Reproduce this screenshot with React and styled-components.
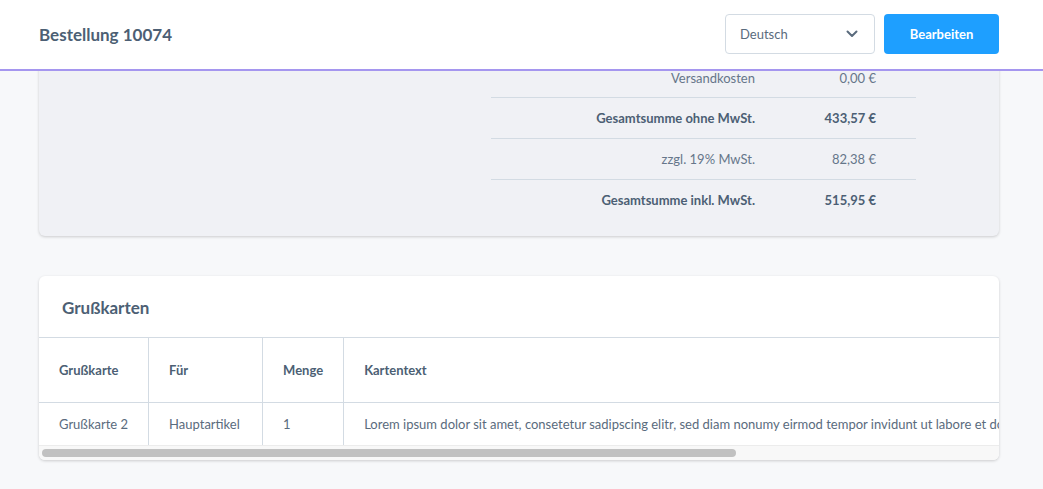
import React from "react";
import styled, { createGlobalStyle } from "styled-components";

const GlobalStyle = createGlobalStyle`
  * { box-sizing: border-box; }
  html, body {
    margin: 0;
    padding: 0;
    background: #f7f8fa;
    font-family: "Lato", "Liberation Sans", sans-serif;
    color: #4c5f74;
  }
`;

const Page = styled.div`
  height: 489px;
  overflow: hidden;
  display: flex;
  flex-direction: column;
`;

const Header = styled.header`
  flex: 0 0 auto;
  height: 71px;
  background: #fff;
  border-bottom: 2px solid #a596ef;
  display: flex;
  align-items: center;
  justify-content: space-between;
  padding: 0 44px 0 39px;
  position: relative;
  z-index: 2;
`;

const Title = styled.h1`
  margin: 0;
  font-size: 17px;
  font-weight: 700;
  color: #4c5f74;
`;

const Actions = styled.div`
  display: flex;
  gap: 9px;
  margin-top: -2px;
`;

const Select = styled.div`
  width: 150px;
  height: 40px;
  border: 1px solid #d3dbe3;
  border-radius: 4px;
  display: flex;
  align-items: center;
  justify-content: space-between;
  padding: 0 16px 0 14px;
  font-size: 13px;
  color: #5a6b7d;
  background: #fff;
`;

const Button = styled.button`
  width: 115px;
  height: 40px;
  border: none;
  border-radius: 4px;
  background: #1e9fff;
  color: #fff;
  font-family: inherit;
  font-size: 13px;
  font-weight: 700;
`;

const Main = styled.main`
  flex: 1;
  overflow: hidden;
  padding: 0 44px 0 39px;
  display: flex;
  flex-direction: column;
  gap: 40px;
`;

const SummaryCard = styled.section`
  margin-top: -31px;
  background: #f0f1f5;
  border-radius: 6px;
  box-shadow: 0 1px 3px rgba(0, 0, 0, 0.18);
  padding: 16px 83px 16px 0;
  display: flex;
  justify-content: flex-end;
`;

const Totals = styled.div`
  width: 425px;
`;

const TotalRow = styled.div`
  display: grid;
  grid-template-columns: 264px 1fr;
  height: 41px;
  align-items: center;
  font-size: 13px;
  font-weight: ${(p) => (p.$bold ? 700 : 400)};
  color: ${(p) => (p.$bold ? "#4c5f74" : "#66768a")};
  & + & {
    border-top: 1px solid #d3dbe3;
  }
  &:first-child {
    padding-top: 2px;
  }
`;

const Cell = styled.span`
  text-align: right;
  padding-right: ${(p) => p.$pad || 0}px;
`;

const Card = styled.section`
  background: #fff;
  border-radius: 6px;
  box-shadow: 0 1px 3px rgba(0, 0, 0, 0.18);
  overflow: hidden;
`;

const CardTitle = styled.h2`
  margin: 0;
  height: 62px;
  display: flex;
  align-items: center;
  padding: 2px 0 0 23px;
  font-size: 17px;
  font-weight: 700;
  color: #4c5f74;
  border-bottom: 1px solid #d3dbe3;
`;

const Scroller = styled.div`
  overflow-x: hidden;
`;

const ScrollTrack = styled.div`
  height: 15px;
  background: #f8f8f8;
  border-top: 1px solid #ececec;
  padding: 3px 3px 0;
`;

const ScrollThumb = styled.div`
  height: 8px;
  border-radius: 4px;
  background: #c1c1c1;
`;

const Table = styled.table`
  border-collapse: collapse;
  white-space: nowrap;
  font-size: 13px;
`;

const Th = styled.th`
  height: 64px;
  text-align: left;
  font-weight: 700;
  padding: 0 20px;
  width: ${(p) => p.$w || "auto"};
  min-width: ${(p) => p.$w || "auto"};
  color: #4c5f74;
  border-right: 1px solid #d3dbe3;
  border-bottom: 1px solid #d3dbe3;
  &:last-child { border-right: none; }
`;

const Td = styled.td`
  height: 43px;
  padding: 0 20px;
  color: #5a6b7d;
  border-right: 1px solid #d3dbe3;
  &:last-child { border-right: none; }
`;

const Chevron = () => (
  <svg width="12" height="8" viewBox="0 0 12 8" fill="none">
    <path d="M1.5 1.5 6 6l4.5-4.5" stroke="#5a6b7d" strokeWidth="2" strokeLinecap="round" strokeLinejoin="round" />
  </svg>
);

const totals = [
  { label: "Versandkosten", value: "0,00 €" },
  { label: "Gesamtsumme ohne MwSt.", value: "433,57 €", bold: true },
  { label: "zzgl. 19% MwSt.", value: "82,38 €" },
  { label: "Gesamtsumme inkl. MwSt.", value: "515,95 €", bold: true },
];

// visible part of the wide table, as a share of the track
const thumbShare = 694 / 954;

export default function App() {
  return (
    <Page>
      <GlobalStyle />
      <Header>
        <Title>Bestellung 10074</Title>
        <Actions>
          <Select>
            Deutsch
            <Chevron />
          </Select>
          <Button>Bearbeiten</Button>
        </Actions>
      </Header>
      <Main>
        <SummaryCard>
          <Totals>
            {totals.map((t) => (
              <TotalRow key={t.label} $bold={t.bold}>
                <Cell>{t.label}</Cell>
                <Cell $pad={40}>{t.value}</Cell>
              </TotalRow>
            ))}
          </Totals>
        </SummaryCard>
        <Card>
          <CardTitle>Grußkarten</CardTitle>
          <Scroller>
            <Table>
              <thead>
                <tr>
                  <Th $w="109px">Grußkarte</Th>
                  <Th $w="114px">Für</Th>
                  <Th $w="81px">Menge</Th>
                  <Th>Kartentext</Th>
                </tr>
              </thead>
              <tbody>
                <tr>
                  <Td>Grußkarte 2</Td>
                  <Td>Hauptartikel</Td>
                  <Td>1</Td>
                  <Td>
                    Lorem ipsum dolor sit amet, consetetur sadipscing elitr, sed diam nonumy eirmod tempor invidunt ut labore et dolore magna aliquyam erat, sed diam voluptua.
                  </Td>
                </tr>
              </tbody>
            </Table>
          </Scroller>
          <ScrollTrack>
            <ScrollThumb style={{ width: `${thumbShare * 100}%` }} />
          </ScrollTrack>
        </Card>
      </Main>
    </Page>
  );
}
